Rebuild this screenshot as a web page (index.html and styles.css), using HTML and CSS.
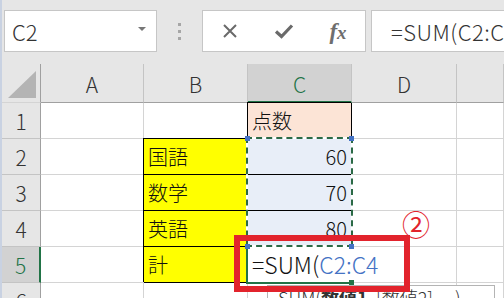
FILE: index.html
```html
<!DOCTYPE html>
<html lang="ja">
<head>
<meta charset="utf-8">
<link rel="stylesheet" href="styles.css">
</head>
<body>
<div class="app">
  <div class="topbar">
    <div class="namebox"><span>C2</span><span class="nb-arrow"></span></div>
    <div class="grip"><i></i><i></i><i></i></div>
    <div class="fbtns">
      <span class="slot"><svg width="16" height="16" viewBox="0 0 16 16"><path d="M2 2L14 14M14 2L2 14" stroke="#6a6a6a" stroke-width="2" fill="none"/></svg></span>
      <span class="slot"><svg width="20" height="16" viewBox="0 0 20 16"><path d="M2 8.5L7.5 13.5L18 2.5" stroke="#6a6a6a" stroke-width="3.2" fill="none"/></svg></span>
      <span class="slot"><span class="fx">f<span class="fxx">x</span></span></span>
    </div>
    <div class="finput">=SUM(C2:C4</div>
  </div>
  <div class="sheet">
    <div class="c h corner"><svg width="38" height="38" viewBox="0 0 38 38"><polygon points="6,34 34,34 34,7" fill="#b4b4b4"/></svg></div>
    <div class="c h ch">A</div>
    <div class="c h ch">B</div>
    <div class="c h ch sel">C</div>
    <div class="c h ch">D</div>
    <div class="c h ch"></div>

    <div class="c h rh">1</div>
    <div class="c"></div>
    <div class="c"></div>
    <div class="c bx peach">点数</div>
    <div class="c"></div>
    <div class="c"></div>

    <div class="c h rh">2</div>
    <div class="c"></div>
    <div class="c bx yellow">国語</div>
    <div class="c bx blue num">60</div>
    <div class="c"></div>
    <div class="c"></div>

    <div class="c h rh">3</div>
    <div class="c"></div>
    <div class="c bx yellow">数学</div>
    <div class="c bx blue num">70</div>
    <div class="c"></div>
    <div class="c"></div>

    <div class="c h rh">4</div>
    <div class="c"></div>
    <div class="c bx yellow">英語</div>
    <div class="c bx blue num">80</div>
    <div class="c"></div>
    <div class="c"></div>

    <div class="c h rh rsel">5</div>
    <div class="c"></div>
    <div class="c bx yellow">計</div>
    <div class="c"></div>
    <div class="c"></div>
    <div class="c"></div>

    <div class="c h rh">6</div>
    <div class="c"></div>
    <div class="c"></div>
    <div class="c"></div>
    <div class="c"></div>
    <div class="c"></div>

    <div class="editor">=SUM(<span class="ref">C2:C4</span></div>
    <div class="cellsel"></div>
    <div class="fillhandle"></div>
    <div class="marquee"><div class="ants"></div></div>
    <div class="hd hd-tl"></div>
    <div class="hd hd-tr"></div>
    <div class="hd hd-bl"></div>
    <div class="hd hd-br"></div>
    <div class="tip">SUM(<b>数値1</b>, [数値2], ...)</div>
    <div class="redbox"></div>
    <div class="mark">②</div>
  </div>
</div>
</body>
</html>
```

FILE: styles.css
```css
* { box-sizing: border-box; margin: 0; padding: 0; }
html, body { margin: 0; }
body {
  width: 504px;
  height: 298px;
  overflow: hidden;
  background: #e6e6e6;
  font-family: "Noto Sans CJK JP", "Noto Sans", sans-serif;
  font-weight: 300;
}
.app {
  border-left: 2px solid #c9d2e2;
  height: 298px;
  overflow: hidden;
}
.topbar {
  height: 64px;
  display: flex;
  align-items: flex-start;
  padding: 10px 0 0 2px;
}
.namebox {
  width: 153px;
  height: 42px;
  flex: none;
  background: #fff;
  border: 1px solid #c6c6c6;
  display: flex;
  align-items: center;
  justify-content: space-between;
  padding: 0 10px 0 7px;
  font-size: 22px;
  color: #333;
}
.nb-arrow {
  width: 0;
  height: 0;
  border-left: 4px solid transparent;
  border-right: 4px solid transparent;
  border-top: 4px solid #777;
  margin-top: -4px;
}
.grip {
  width: 45px;
  flex: none;
  display: flex;
  flex-direction: column;
  align-items: center;
  gap: 4px;
  padding-top: 13px;
}
.grip i { display: block; width: 3px; height: 3px; background: #a6a6a6; }
.fbtns {
  width: 164px;
  height: 42px;
  flex: none;
  background: #fff;
  border: 1px solid #c6c6c6;
  display: flex;
  align-items: center;
}
.slot {
  width: 54px;
  display: flex;
  justify-content: center;
  align-items: center;
}
.fx {
  font-family: "Liberation Serif", serif;
  font-style: italic;
  font-weight: 700;
  font-size: 23px;
  color: #6e6e6e;
  line-height: 1;
}
.fxx { font-size: 19px; }
.finput {
  margin-left: 5px;
  flex: 1;
  height: 42px;
  background: #fff;
  border: 1px solid #c6c6c6;
  border-right: none;
  padding-left: 19px;
  font-size: 22px;
  letter-spacing: 0.5px;
  line-height: 40px;
  color: #333;
  white-space: nowrap;
  overflow: hidden;
}
.sheet {
  display: grid;
  grid-template-columns: 39px 103px 104px 104px 105px 1fr;
  grid-template-rows: 39px repeat(6, 36px);
  position: relative;
  background: #fff;
}
.c {
  border-right: 1px solid #d4d4d4;
  border-bottom: 1px solid #d4d4d4;
  font-size: 20px;
  display: flex;
  align-items: center;
  padding: 0 4px;
  white-space: nowrap;
  color: #111;
}
.h {
  background: #e6e6e6;
  color: #333;
  font-size: 21px;
  justify-content: center;
  padding: 0;
}
.ch {
  border-right-color: #c4c4c4;
  border-bottom-color: #a0a0a0;
  padding-top: 2px;
}
.corner { justify-content: flex-start; align-items: flex-start; border-right-color: #a0a0a0; }
.corner svg { display: block; }
.rh { border-right-color: #a0a0a0; border-bottom-color: #c4c4c4; }
.sel {
  background: #d2d2d2;
  color: #217346;
  border-bottom: 2px solid #217346;
}
.rsel {
  background: #d2d2d2;
  color: #217346;
  border-right: 2px solid #217346;
}
.bx {
  border-right-color: #000;
  border-bottom-color: #000;
  box-shadow: -1px -1px 0 #000;
}
.peach { background: #fce4d6; }
.yellow { background: #ffff00; }
.blue { background: #e8eef8; }
.num { justify-content: flex-end; }

.editor {
  position: absolute;
  left: 246px;
  top: 183px;
  width: 145px;
  height: 35px;
  background: #fff;
  padding-left: 4px;
  font-size: 23px;
  line-height: 35px;
  color: #111;
  white-space: nowrap;
}
.ref { color: #4472c4; }
.cellsel {
  position: absolute;
  left: 244px;
  top: 182px;
  width: 108px;
  height: 38px;
  border-left: 2px solid #217346;
  border-bottom: 2px solid #217346;
}
.fillhandle {
  position: absolute;
  left: 347px;
  top: 216px;
  width: 5px;
  height: 5px;
  background: #217346;
}
.marquee {
  position: absolute;
  left: 244px;
  top: 73px;
  width: 107px;
  height: 110px;
  border: 2px solid #fff;
}
.ants {
  position: absolute;
  inset: -2px;
  border: 2px dashed #2b6a46;
}
.hd {
  position: absolute;
  width: 5px;
  height: 5px;
  background: #4472c4;
}
.hd-tl { left: 243px; top: 72px; }
.hd-tr { left: 347px; top: 72px; }
.hd-bl { left: 243px; top: 180px; }
.hd-br { left: 347px; top: 180px; }
.tip {
  position: absolute;
  left: 265px;
  top: 221px;
  width: 228px;
  height: 40px;
  background: #fff;
  border: 1px solid #b4b4b4;
  padding: 0 0 0 10px;
  font-size: 18px;
  line-height: 22px;
  color: #333;
  white-space: nowrap;
}
.tip b { font-weight: 700; }
.redbox {
  position: absolute;
  left: 232px;
  top: 171px;
  width: 176px;
  height: 57px;
  border: 6px solid #e2232c;
}
.mark {
  position: absolute;
  left: 400px;
  top: 144px;
  font-size: 28px;
  font-weight: 400;
  line-height: 32px;
  color: #e2232c;
}
```
